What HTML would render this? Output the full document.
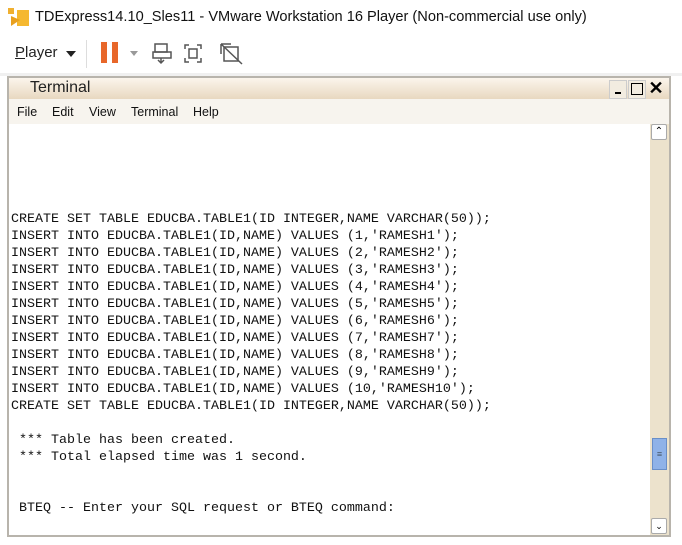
<!DOCTYPE html>
<html><head><style>
body{margin:0;width:682px;height:545px;background:#fff;position:relative;overflow:hidden;font-family:"Liberation Sans",sans-serif}
.abs{position:absolute}
pre{margin:0;font-family:"Liberation Mono",monospace;font-size:13.33px;line-height:17px;color:#111}
</style></head><body>
<div class="abs" style="left:0;top:0;width:682px;height:37px;background:#fff"></div>
<svg class="abs" style="left:8px;top:8px" width="22" height="20"><rect x="0" y="0" width="6" height="6" fill="#f0b030"/><rect x="9" y="2" width="12" height="16" fill="#f5b830"/><path d="M3 8 L12 12 L3 18Z" fill="#e8a020"/></svg>
<div class="abs" style="left:35px;top:9px;font-size:14.6px;color:#111">TDExpress14.10_Sles11 - VMware Workstation 16 Player (Non-commercial use only)</div>
<div class="abs" style="left:15px;top:44px;font-size:15px;color:#222"><u>P</u>layer</div>
<div class="abs" style="left:66px;top:51px;width:0;height:0;border-left:5px solid transparent;border-right:5px solid transparent;border-top:6px solid #222"></div>
<div class="abs" style="left:86px;top:40px;width:1px;height:28px;background:#ddd"></div>
<div class="abs" style="left:101px;top:42px;width:6px;height:21px;background:#e8672a"></div>
<div class="abs" style="left:112px;top:42px;width:6px;height:21px;background:#e8672a"></div>
<div class="abs" style="left:130px;top:51px;width:0;height:0;border-left:4px solid transparent;border-right:4px solid transparent;border-top:5px solid #999"></div>
<svg class="abs" style="left:152px;top:41px" width="100" height="24" fill="none" stroke="#555" stroke-width="1.5"><rect x="3" y="3" width="12" height="8"/><rect x="1" y="11" width="18" height="6"/><path d="M9 17v5M6 19l3 3 3-3"/><path d="M37 4h-4v4M45 4h4v4M37 21h-4v-4M45 21h4v-4"/><rect x="37" y="8" width="8" height="9"/><rect x="72" y="6" width="14" height="14"/><path d="M69 3h10M69 3v10M69 3L90 23"/></svg>
<div class="abs" style="left:0;top:73px;width:682px;height:3px;background:#f0f0f0"></div>
<div class="abs" style="left:7px;top:76px;width:664px;height:461px;background:#b8b4ac"></div>
<div class="abs" style="left:9px;top:78px;width:660px;height:21px;background:linear-gradient(#fbf5ec,#e8d8c0)"></div>
<div class="abs" style="left:30px;top:79px;font-size:16px;color:#222">Terminal</div>
<div class="abs" style="left:609px;top:80px;width:16px;height:17px;background:#f2ece0;border:1px solid #ccc"><div class="abs" style="left:5px;top:11px;width:6px;height:2px;background:#000"></div></div>
<div class="abs" style="left:628px;top:80px;width:16px;height:17px;background:#f2ece0;border:1px solid #ccc"><div class="abs" style="left:2px;top:2px;width:10px;height:10px;border:1.5px solid #000"></div></div>
<div class="abs" style="left:647px;top:78px;width:18px;height:20px;font-size:18px;font-weight:bold;color:#000;text-align:center">✕</div>
<div class="abs" style="left:9px;top:99px;width:660px;height:25px;background:#f7f4ee"></div>
<div class="abs" style="left:17px;top:105px;font-size:12.5px;color:#111">File</div>
<div class="abs" style="left:52px;top:105px;font-size:12.5px;color:#111">Edit</div>
<div class="abs" style="left:89px;top:105px;font-size:12.5px;color:#111">View</div>
<div class="abs" style="left:131px;top:105px;font-size:12.5px;color:#111">Terminal</div>
<div class="abs" style="left:193px;top:105px;font-size:12.5px;color:#111">Help</div>
<div class="abs" style="left:9px;top:124px;width:641px;height:411px;background:#fff"></div>
<div class="abs" style="left:650px;top:124px;width:19px;height:411px;background:#ece2cc"></div>
<div class="abs" style="left:651px;top:124px;width:14px;height:14px;background:#fff;border:1px solid #aaa;border-radius:2px;font-size:10px;text-align:center;line-height:14px">⌃</div>
<div class="abs" style="left:652px;top:438px;width:13px;height:30px;background:#8fb2e8;border:1px solid #6a8fc8;color:#456;font-size:9px;text-align:center;line-height:30px">≡</div>
<div class="abs" style="left:651px;top:518px;width:14px;height:14px;background:#fff;border:1px solid #aaa;border-radius:2px;font-size:9px;text-align:center;line-height:14px">⌄</div>
<pre class="abs" style="left:11px;top:211px">CREATE SET TABLE EDUCBA.TABLE1(ID INTEGER,NAME VARCHAR(50));
INSERT INTO EDUCBA.TABLE1(ID,NAME) VALUES (1,'RAMESH1');
INSERT INTO EDUCBA.TABLE1(ID,NAME) VALUES (2,'RAMESH2');
INSERT INTO EDUCBA.TABLE1(ID,NAME) VALUES (3,'RAMESH3');
INSERT INTO EDUCBA.TABLE1(ID,NAME) VALUES (4,'RAMESH4');
INSERT INTO EDUCBA.TABLE1(ID,NAME) VALUES (5,'RAMESH5');
INSERT INTO EDUCBA.TABLE1(ID,NAME) VALUES (6,'RAMESH6');
INSERT INTO EDUCBA.TABLE1(ID,NAME) VALUES (7,'RAMESH7');
INSERT INTO EDUCBA.TABLE1(ID,NAME) VALUES (8,'RAMESH8');
INSERT INTO EDUCBA.TABLE1(ID,NAME) VALUES (9,'RAMESH9');
INSERT INTO EDUCBA.TABLE1(ID,NAME) VALUES (10,'RAMESH10');
CREATE SET TABLE EDUCBA.TABLE1(ID INTEGER,NAME VARCHAR(50));

 *** Table has been created.
 *** Total elapsed time was 1 second.


 BTEQ -- Enter your SQL request or BTEQ command:</pre>
</body></html>
